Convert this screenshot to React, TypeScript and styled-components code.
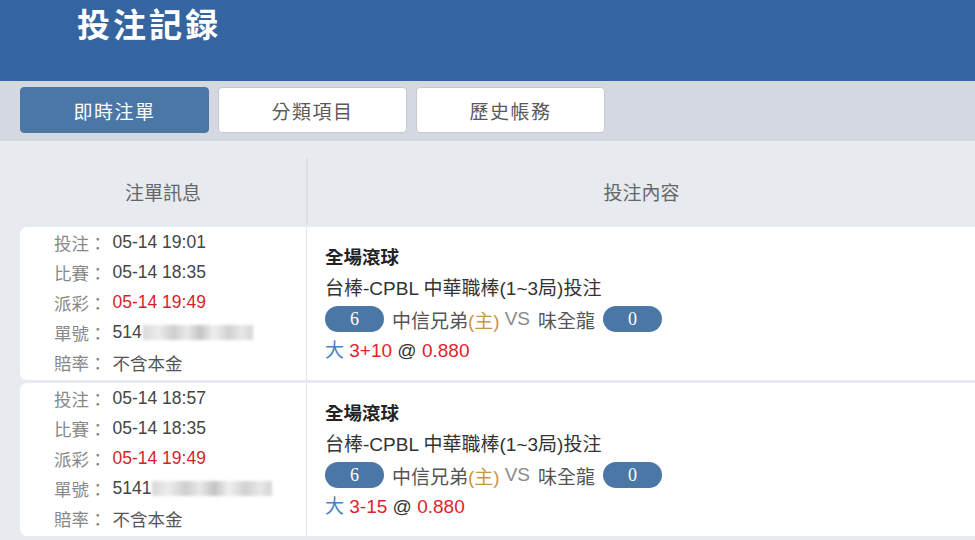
import React from 'react';
import styled, { createGlobalStyle } from 'styled-components';

interface TabProps {
  active?: boolean;
}

interface BetRecord {
  id: number;
  betTime: string;
  gameTime: string;
  payTime: string;
  orderHead: string;
  blurWidth: number;
  home: string;
  away: string;
  homeScore: number;
  awayScore: number;
  pick: string;
  line: string;
  odds: string;
}

const records: BetRecord[] = [
  {
    id: 1,
    betTime: '05-14 19:01',
    gameTime: '05-14 18:35',
    payTime: '05-14 19:49',
    orderHead: '514',
    blurWidth: 110,
    home: '中信兄弟',
    away: '味全龍',
    homeScore: 6,
    awayScore: 0,
    pick: '大',
    line: '3+10',
    odds: '0.880'
  },
  {
    id: 2,
    betTime: '05-14 18:57',
    gameTime: '05-14 18:35',
    payTime: '05-14 19:49',
    orderHead: '5141',
    blurWidth: 120,
    home: '中信兄弟',
    away: '味全龍',
    homeScore: 6,
    awayScore: 0,
    pick: '大',
    line: '3-15',
    odds: '0.880'
  }
];

const tabs = ['即時注單', '分類項目', '歷史帳務'];

function BetRow({ record }: { record: BetRecord }) {
  return (
    <>
      <InfoCell>
        <InfoLine>
          <Label>投注：</Label>
          <Value>{record.betTime}</Value>
        </InfoLine>
        <InfoLine>
          <Label>比賽：</Label>
          <Value>{record.gameTime}</Value>
        </InfoLine>
        <InfoLine>
          <Label>派彩：</Label>
          <Value red>{record.payTime}</Value>
        </InfoLine>
        <InfoLine>
          <Label>單號：</Label>
          <Value>{record.orderHead}</Value>
          <Blurred style={{ width: record.blurWidth }} />
        </InfoLine>
        <InfoLine>
          <Label>賠率：</Label>
          <Plain>不含本金</Plain>
        </InfoLine>
      </InfoCell>
      <BetCell>
        <BetType>全場滾球</BetType>
        <BetLine>台棒-CPBL 中華職棒(1~3局)投注</BetLine>
        <MatchLine>
          <Score>{record.homeScore}</Score>
          <Team>{record.home}</Team>
          <Home>(主)</Home>
          <Versus>VS</Versus>
          <Team>{record.away}</Team>
          <Score>{record.awayScore}</Score>
        </MatchLine>
        <BetLine>
          <Pick>{record.pick}</Pick> <Red>{record.line}</Red> @ <Red>{record.odds}</Red>
        </BetLine>
      </BetCell>
    </>
  );
}

export default function App() {
  return (
    <>
      <GlobalStyle />
      <Page>
        <Header>
          <Title>投注記録</Title>
        </Header>
        <TabBar>
          {tabs.map((tab, i) => (
            <Tab key={tab} active={i === 0}>
              {tab}
            </Tab>
          ))}
        </TabBar>
        <Board>
          <Table>
            <HeadCell>注單訊息</HeadCell>
            <HeadCell divided>投注內容</HeadCell>
            {records.map((r) => (
              <BetRow key={r.id} record={r} />
            ))}
          </Table>
        </Board>
      </Page>
    </>
  );
}

const GlobalStyle = createGlobalStyle`
  html, body {
    margin: 0;
    padding: 0;
    background: #e7eaef;
  }
  body {
    font-family: "Liberation Sans", "Noto Sans CJK TC", sans-serif;
    color: #444;
  }
`;

const Page = styled.div`
  width: 975px;
  height: 540px;
  overflow: hidden;
  background: #e7eaef;
`;

const Header = styled.header`
  height: 81px;
  background: #3465a0;
  padding-left: 77px;
  box-sizing: border-box;
`;

const Title = styled.h1`
  margin: 0;
  padding-top: 2px;
  font-family: "Noto Sans CJK TC", serif;
  font-size: 33px;
  font-weight: 700;
  letter-spacing: 3px;
  line-height: 42px;
  color: #fff;
`;

const TabBar = styled.nav`
  display: flex;
  gap: 9px;
  height: 60px;
  box-sizing: border-box;
  padding: 6px 20px 0;
  background: #d4d9e1;
`;

const Tab = styled.div<TabProps>`
  width: 189px;
  height: 46px;
  box-sizing: border-box;
  display: flex;
  align-items: center;
  justify-content: center;
  border-radius: 4px;
  font-family: "Noto Sans CJK TC", sans-serif;
  font-size: 19px;
  letter-spacing: 1.5px;
  background: ${(p) => (p.active ? '#4a77a6' : '#fff')};
  color: ${(p) => (p.active ? '#fff' : '#5a5a5a')};
  border: 1px solid ${(p) => (p.active ? '#4a77a6' : '#c3c9d2')};
`;

const Board = styled.main`
  padding: 17px 0 0 20px;
`;

const Table = styled.div`
  display: grid;
  grid-template-columns: 286px 1fr;
  row-gap: 3px;
`;

const HeadCell = styled.div<{ divided?: boolean }>`
  height: 66px;
  display: flex;
  align-items: center;
  justify-content: center;
  font-family: "Noto Sans CJK TC", sans-serif;
  font-size: 19px;
  color: #666;
  border-left: ${(p) => (p.divided ? '2px solid #dcdfe4' : 'none')};
`;

const InfoCell = styled.div`
  background: #fff;
  border-radius: 7px 0 0 7px;
  padding: 0 0 3px 34px;
  height: 153px;
  box-sizing: border-box;
`;

const InfoLine = styled.div`
  display: flex;
  align-items: center;
  height: 30px;
  font-size: 17.5px;
`;

const Label = styled.span`
  color: #888;
  margin-right: 6px;
`;

const Value = styled.span<{ red?: boolean }>`
  color: ${(p) => (p.red ? '#d81e2a' : '#454545')};
`;

const Plain = styled.span`
  color: #555;
`;

const Blurred = styled.span`
  display: inline-block;
  height: 15px;
  margin-left: 1px;
  background: linear-gradient(
    90deg,
    #cfcfcf 0%,
    #e8e8e8 14%,
    #c2c2c2 28%,
    #e4e4e4 40%,
    #b5b5b5 52%,
    #ececec 64%,
    #c6c6c6 78%,
    #e2e2e2 90%,
    #cccccc 100%
  );
  filter: blur(1.5px);
  opacity: 0.8;
`;

const BetCell = styled.div`
  background: #fff;
  border-left: 1px solid #e3e5e8;
  height: 153px;
  box-sizing: border-box;
  padding-left: 18px;
  display: flex;
  flex-direction: column;
  justify-content: center;
`;

const BetType = styled.div`
  font-size: 18.5px;
  font-weight: 700;
  line-height: 31px;
  color: #222;
`;

const BetLine = styled.div`
  font-size: 19px;
  line-height: 31px;
  color: #333;
`;

const MatchLine = styled.div`
  display: flex;
  align-items: center;
  height: 31px;
  font-size: 19px;
`;

const Score = styled.span`
  width: 59px;
  height: 26px;
  border-radius: 13px;
  background: #4a77a6;
  color: #fff;
  font-family: "Liberation Serif", serif;
  font-size: 18px;
  display: flex;
  align-items: center;
  justify-content: center;
`;

const Team = styled.span`
  color: #555;
  margin: 0 8px;
`;

const Home = styled.span`
  color: #c9954e;
  margin-left: -8px;
`;

const Versus = styled.span`
  color: #8a8a8a;
  margin-left: 5px;
`;

const Pick = styled.span`
  color: #4a83c4;
`;

const Red = styled.span`
  color: #e0242c;
`;
